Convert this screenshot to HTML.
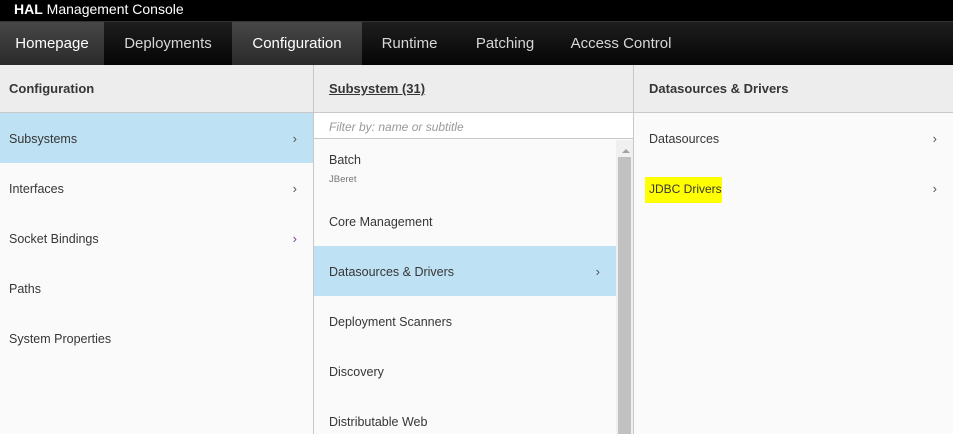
<!DOCTYPE html>
<html><head><style>
*{margin:0;padding:0;box-sizing:border-box}
html,body{width:953px;height:434px;overflow:hidden}
body{font-family:"Liberation Sans",sans-serif;background:#fafafa;position:relative;color:#363636}
.top{position:absolute;left:0;top:0;width:953px;height:21px;background:#000;color:#fff;font-size:14px;line-height:19px;padding-left:14px}
.nav{position:absolute;left:0;top:21px;width:953px;height:44px;background:linear-gradient(#1e1e1e,#050505);border-top:1px solid #333}
.nav div{position:absolute;top:0;height:43px;line-height:44px;color:#d6d6d6;font-size:15px;text-align:center}
.nav .g{background:linear-gradient(#474747,#2a2a2a);color:#fff}
.col{position:absolute;top:65px;height:369px;background:#fafafa}
.hd{height:48px;background:#ededed;border-bottom:1px solid #c8c8c8;font-weight:bold;font-size:13px;line-height:47px;padding-left:9px;color:#363636}
.it{position:absolute;left:0;height:50px;font-size:12.5px;padding-left:9px;line-height:52px;color:#363636}
.it .ch{position:absolute;right:16px;top:0;color:#555;font-size:13px}
.sel{background:#bee1f4}
</style></head><body>
<div class="top"><b>HAL</b> Management Console</div>
<div class="nav">
<div class="g" style="left:0;width:104px">Homepage</div>
<div style="left:104px;width:128px">Deployments</div>
<div class="g" style="left:232px;width:130px">Configuration</div>
<div style="left:362px;width:95px">Runtime</div>
<div style="left:457px;width:96px">Patching</div>
<div style="left:553px;width:136px">Access Control</div>
</div>
<div class="col" style="left:0;width:313px">
<div class="hd">Configuration</div>
<div class="it sel" style="top:48px;width:313px">Subsystems<span class="ch">›</span></div>
<div class="it" style="top:98px;width:313px">Interfaces<span class="ch">›</span></div>
<div class="it" style="top:148px;width:313px">Socket Bindings<span class="ch" style="color:#7a3f8a">›</span></div>
<div class="it" style="top:198px;width:313px">Paths</div>
<div class="it" style="top:248px;width:313px">System Properties</div>
</div>
<div style="position:absolute;left:313px;top:65px;width:1px;height:369px;background:#c8c8c8"></div>
<div class="col" style="left:314px;width:319px">
<div class="hd" style="padding-left:15px"><u>Subsystem (31)</u></div>
<div style="position:absolute;top:48px;left:0;width:319px;height:26px;background:#fff;border-bottom:1px solid #c8c8c8;font-size:12px;font-style:italic;color:#999;line-height:28px;padding-left:15px">Filter by: name or subtitle</div>
<div class="it" style="top:75px;width:302px;line-height:normal;padding:13px 15px">Batch<div style="font-size:9.5px;color:#777;margin-top:7px">JBeret</div></div>
<div class="it" style="top:131px;width:302px;padding-left:15px">Core Management</div>
<div class="it sel" style="top:181px;width:302px;padding-left:15px">Datasources &amp; Drivers<span class="ch">›</span></div>
<div class="it" style="top:231px;width:302px;padding-left:15px">Deployment Scanners</div>
<div class="it" style="top:281px;width:302px;padding-left:15px">Discovery</div>
<div class="it" style="top:331px;width:302px;padding-left:15px">Distributable Web</div>
<div style="position:absolute;left:302px;top:75px;width:17px;height:294px;background:#f0f0f0"></div>
<div style="position:absolute;left:308px;top:84px;width:0;height:0;border-left:4px solid transparent;border-right:4px solid transparent;border-bottom:4px solid #a3a3a3"></div>
<div style="position:absolute;left:304px;top:92px;width:13px;height:277px;background:#c1c1c1"></div>
</div>
<div style="position:absolute;left:633px;top:65px;width:1px;height:369px;background:#c8c8c8"></div>
<div class="col" style="left:634px;width:319px">
<div class="hd" style="padding-left:15px">Datasources &amp; Drivers</div>
<div class="it" style="top:48px;width:319px;padding-left:15px">Datasources<span class="ch">›</span></div>
<div class="it" style="top:98px;width:319px;padding-left:15px"><span style="position:absolute;left:11px;top:14px;width:77px;height:26px;background:#ffff00"></span><span style="position:relative;font-size:12px">JDBC Drivers</span><span class="ch">›</span></div>
</div>
</body></html>
